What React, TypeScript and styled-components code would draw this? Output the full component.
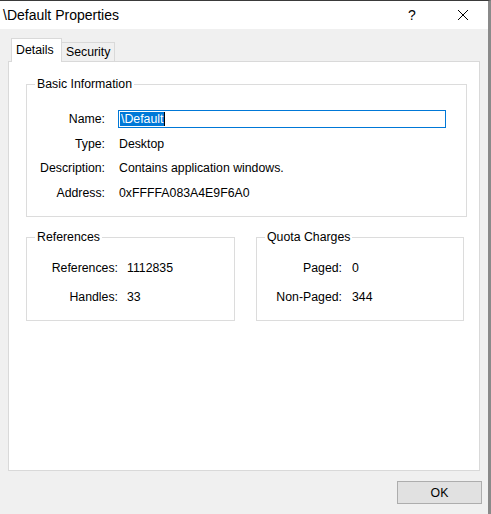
import React from "react";
import styled, { createGlobalStyle } from "styled-components";

const GlobalStyle = createGlobalStyle`
  html, body { margin: 0; padding: 0; background: #f0f0f0; }
  body { font-family: "Liberation Sans", Arial, sans-serif; font-size: 12.3px; color: #000; }
  * { box-sizing: border-box; }
`;

const Window = styled.div`
  width: 491px;
  height: 514px;
  display: flex;
  flex-direction: column;
  border-top: 1px solid #3a3a3a;
  border-right: 3px solid #8a8a8a;
  background: #f0f0f0;
  overflow: hidden;
`;

const TitleBar = styled.div`
  height: 28px;
  flex: none;
  background: #fff;
  display: flex;
  align-items: center;
  padding-left: 3px;
`;

const Title = styled.div`
  flex: 1;
  font-size: 14px;
  line-height: 16px;
`;

const HelpGlyph = styled.div`
  width: 20px;
  text-align: center;
  font-size: 14px;
  line-height: 16px;
  margin-right: 35px;
`;

const CloseBox = styled.div`
  width: 12px;
  height: 12px;
  margin-right: 19px;
  display: flex;
`;

const Body = styled.div`
  flex: 1;
  display: flex;
  flex-direction: column;
  padding: 9px 8px 0 8px;
`;

const TabRow = styled.div`
  display: flex;
  align-items: flex-end;
  padding-left: 3px;
  height: 24px;
  position: relative;
  z-index: 1;
`;

const Tab = styled.div<{ $active?: boolean }>`
  height: ${(p) => (p.$active ? "24px" : "20px")};
  width: ${(p) => (p.$active ? "51px" : "53px")};
  border: 1px solid #d9d9d9;
  border-bottom: ${(p) => (p.$active ? "none" : "1px solid #d9d9d9")};
  border-left: ${(p) => (p.$active ? "1px solid #d9d9d9" : "none")};
  background: ${(p) => (p.$active ? "#fff" : "#f0f0f0")};
  display: flex;
  align-items: ${(p) => (p.$active ? "flex-start" : "center")};
  padding-top: ${(p) => (p.$active ? "4px" : "0")};
  padding-left: 4px;
  line-height: 15px;
`;

const Panel = styled.div`
  height: 410px;
  margin-top: -1px;
  background: #fff;
  border: 1px solid #d9d9d9;
  padding: 22px 12px 0 17px;
  display: flex;
  flex-direction: column;
`;

const Group = styled.div<{ $w: string }>`
  width: ${(p) => p.$w};
  border: 1px solid #dcdcdc;
  padding-bottom: 14px;
`;

const Legend = styled.div`
  width: fit-content;
  margin: -8px 0 0 8px;
  padding: 0 2px;
  background: #fff;
  line-height: 15px;
`;

const Fields = styled.div<{ $label: number; $gap: number; $rowGap: number; $top: number }>`
  display: grid;
  grid-template-columns: ${(p) => p.$label}px 1fr;
  column-gap: ${(p) => p.$gap}px;
  row-gap: ${(p) => p.$rowGap}px;
  grid-auto-rows: 18px;
  margin-top: ${(p) => p.$top}px;
  align-items: center;
`;

const Label = styled.div`
  text-align: right;
  line-height: 18px;
  white-space: nowrap;
`;

const Value = styled.div`
  line-height: 18px;
  white-space: nowrap;
`;

const TextBox = styled.div`
  height: 18px;
  margin-left: -1px;
  margin-right: 20px;
  border: 1px solid #0078d7;
  padding-left: 1px;
  display: flex;
  align-items: center;
`;

const Selected = styled.span`
  background: #0078d7;
  color: #fff;
  line-height: 14px;
  padding: 0 1px;
`;

const Caret = styled.span`
  width: 1px;
  height: 14px;
  background: #000;
`;

const LowerRow = styled.div`
  display: flex;
  gap: 21px;
  margin-top: 20px;
`;

const Footer = styled.div`
  display: flex;
  justify-content: flex-end;
  margin-top: 10px;
  margin-right: -2px;
`;

const Button = styled.div`
  width: 85px;
  height: 23px;
  border: 1px solid #adadad;
  background: #e1e1e1;
  display: flex;
  align-items: center;
  justify-content: center;
`;

export default function App() {
  return (
    <>
      <GlobalStyle />
      <Window>
        <TitleBar>
          <Title>\Default Properties</Title>
          <HelpGlyph>?</HelpGlyph>
          <CloseBox>
            <svg width="12" height="12" viewBox="0 0 12 12">
              <path d="M1 1 L11 11 M11 1 L1 11" stroke="#000" strokeWidth="1" />
            </svg>
          </CloseBox>
        </TitleBar>
        <Body>
          <TabRow>
            <Tab $active>Details</Tab>
            <Tab>Security</Tab>
          </TabRow>
          <Panel>
            <Group $w="441px">
              <Legend>Basic Information</Legend>
              <Fields $label={78} $gap={14} $rowGap={6.6} $top={18}>
                <Label>Name:</Label>
                <TextBox>
                  <Selected>\Default</Selected>
                  <Caret />
                </TextBox>
                <Label>Type:</Label>
                <Value>Desktop</Value>
                <Label>Description:</Label>
                <Value>Contains application windows.</Value>
                <Label>Address:</Label>
                <Value>0xFFFFA083A4E9F6A0</Value>
              </Fields>
            </Group>
            <LowerRow>
              <Group $w="209px">
                <Legend>References</Legend>
                <Fields $label={91} $gap={9} $rowGap={11} $top={14}>
                  <Label>References:</Label>
                  <Value>1112835</Value>
                  <Label>Handles:</Label>
                  <Value>33</Value>
                </Fields>
              </Group>
              <Group $w="208px">
                <Legend>Quota Charges</Legend>
                <Fields $label={85} $gap={10} $rowGap={11} $top={14}>
                  <Label>Paged:</Label>
                  <Value>0</Value>
                  <Label>Non-Paged:</Label>
                  <Value>344</Value>
                </Fields>
              </Group>
            </LowerRow>
          </Panel>
          <Footer>
            <Button>OK</Button>
          </Footer>
        </Body>
      </Window>
    </>
  );
}
